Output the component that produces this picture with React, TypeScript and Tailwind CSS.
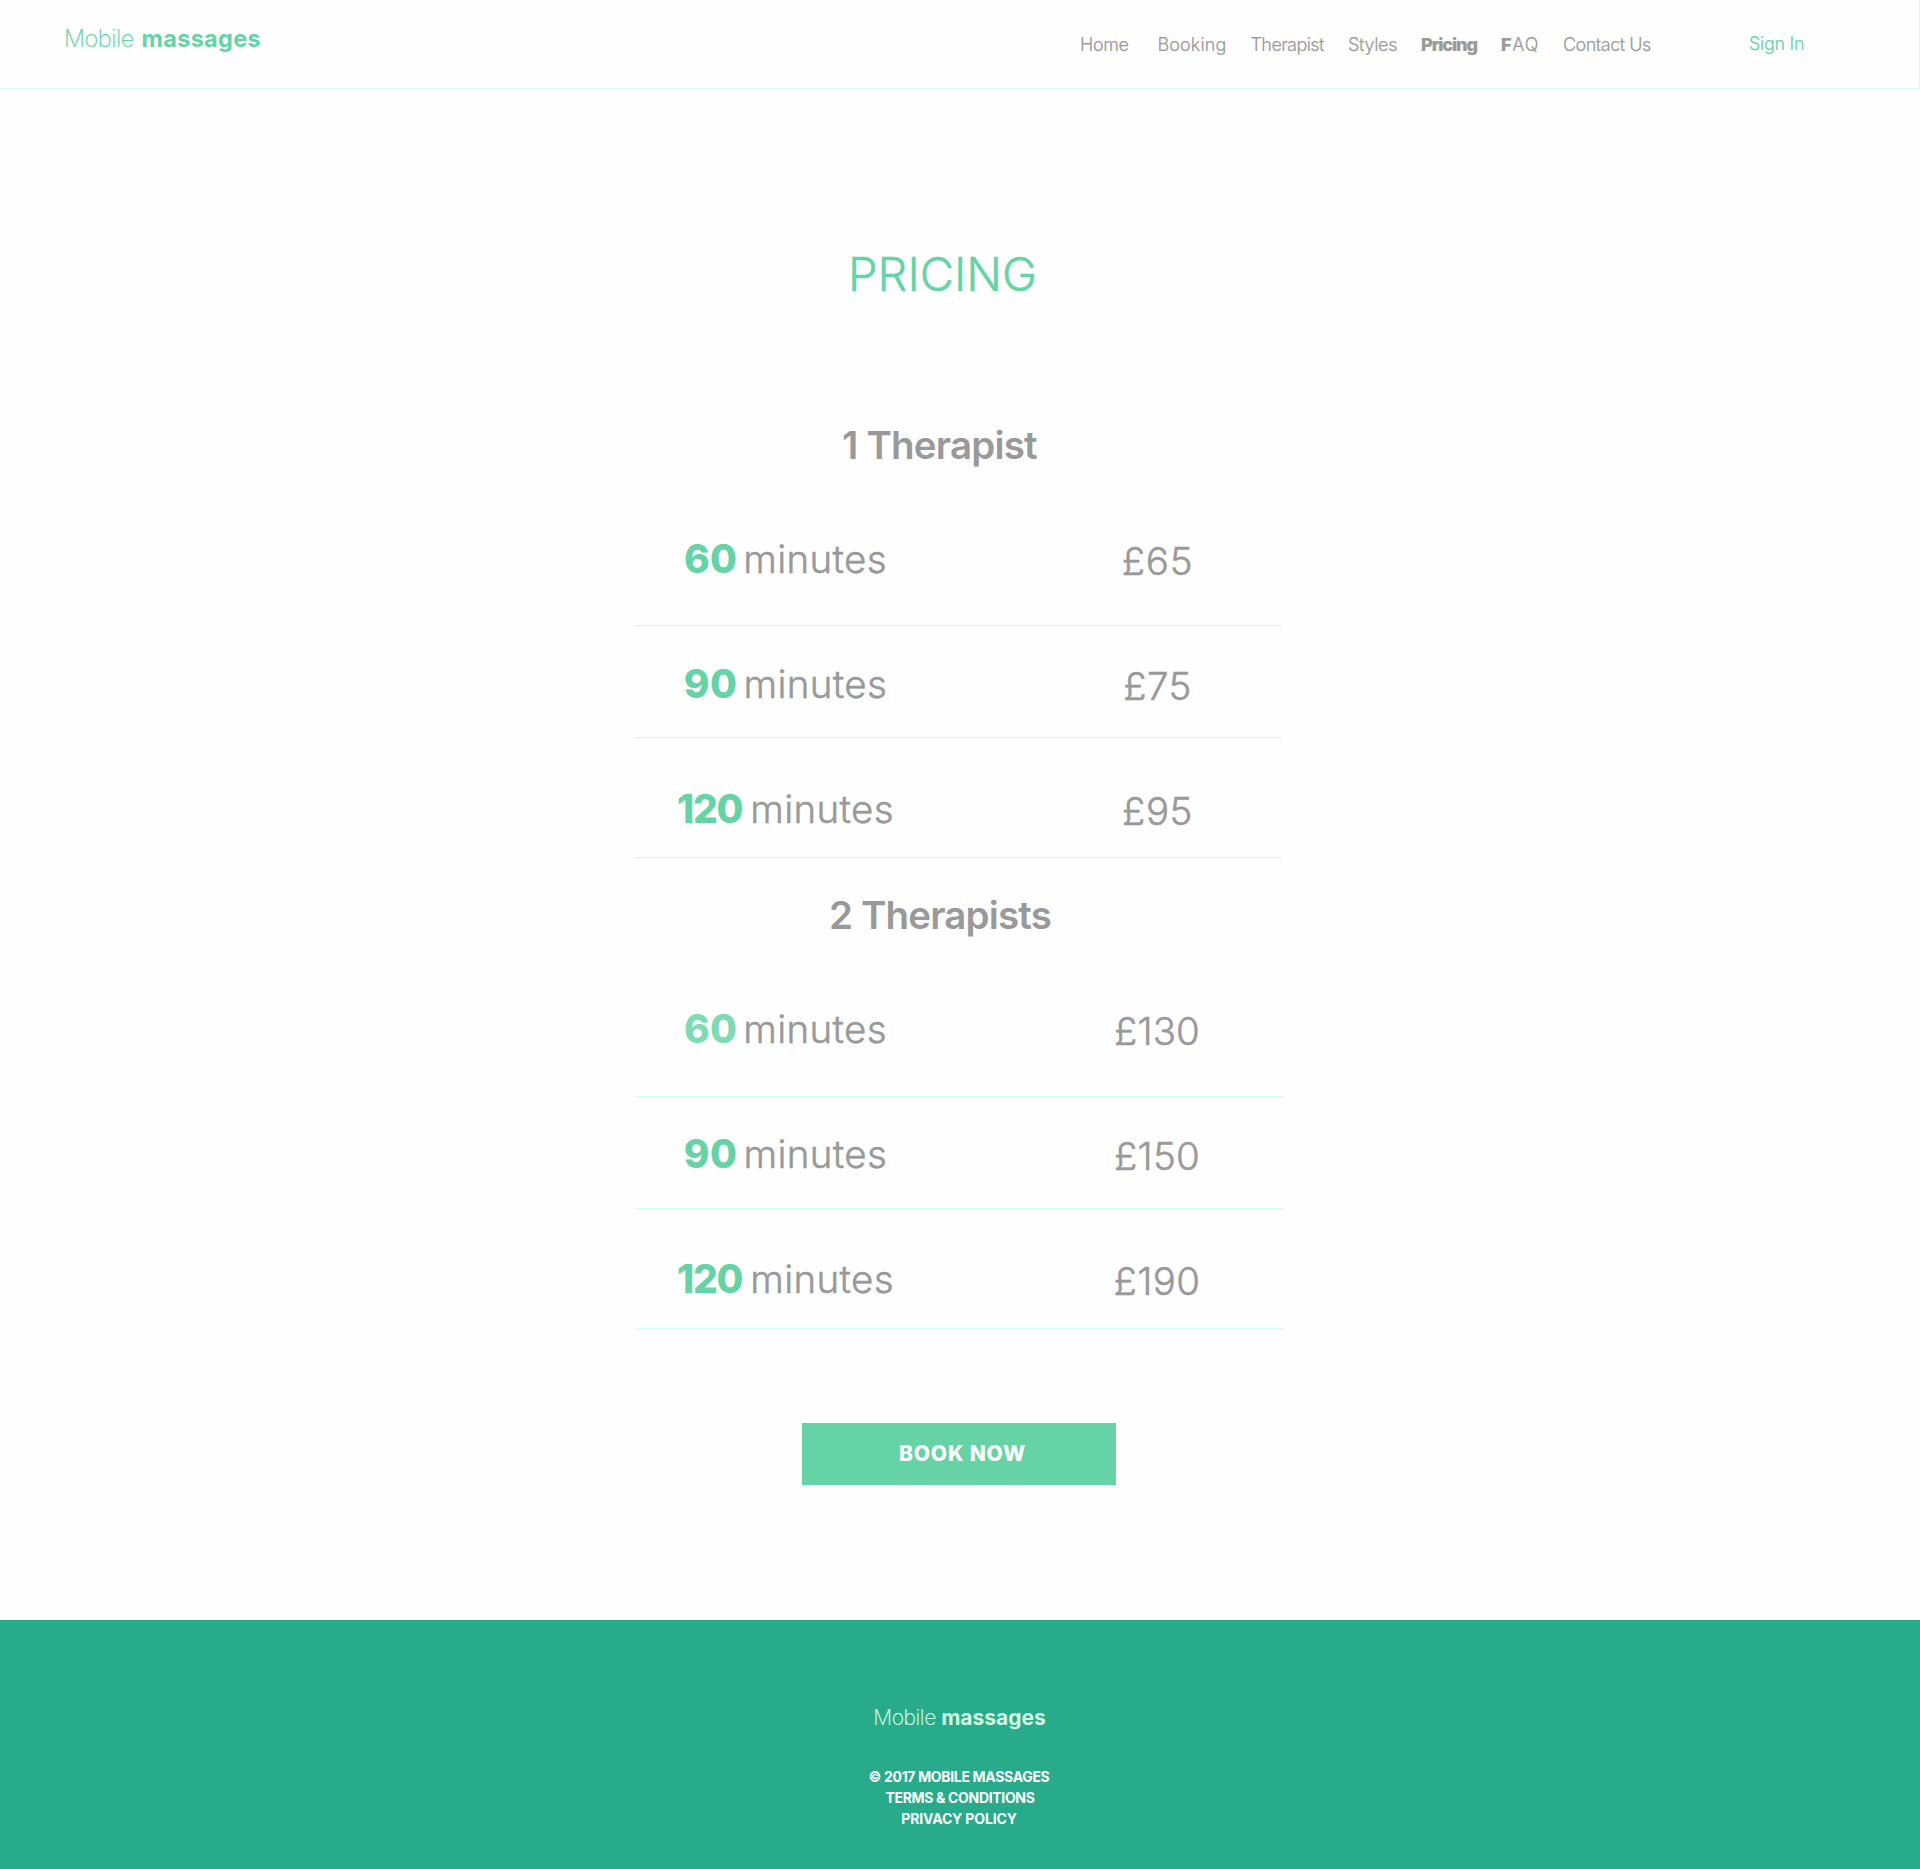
type Row = {
  value: string;
  price: string;
  row: string;
  valueClass: string;
  priceClass: string;
};

const navLinks = [
  { label: "Home", className: "w-[77.5px] tracking-[-0.4px]" },
  { label: "Booking", className: "w-[93px] tracking-[0.1px]" },
  { label: "Therapist", className: "w-[97.5px] tracking-[-0.58px]" },
  { label: "Styles", className: "w-[73px] tracking-[-0.33px]" },
  { label: "Pricing", className: "w-[80px] font-extrabold tracking-[-1.05px]" },
];

const oneTherapist: Row[] = [
  { value: "60", price: "£65", row: "h-[157px] pt-[66px]", valueClass: "mr-[6px] text-[#66d3a6] tracking-[0.2px]", priceClass: "tracking-[0.8px]" },
  { value: "90", price: "£75", row: "h-[112px] pt-[34px]", valueClass: "mr-[6px] text-[#66d3a6] tracking-[0.4px]", priceClass: "tracking-[0.3px]" },
  { value: "120", price: "£95", row: "h-[120px] pt-[47px]", valueClass: "mr-[8px] text-[#66d3a6] tracking-[-1.3px]", priceClass: "tracking-[0.5px]" },
];

const twoTherapists: Row[] = [
  { value: "60", price: "£130", row: "h-[158px] pt-[66px]", valueClass: "mr-[6px] text-[#80dab3] tracking-[0.2px]", priceClass: "tracking-[0.1px]" },
  { value: "90", price: "£150", row: "h-[112px] pt-[33px]", valueClass: "mr-[6px] text-[#66d3a6] tracking-[0.4px]", priceClass: "tracking-[0.2px]" },
  { value: "120", price: "£190", row: "h-[120px] pt-[46px]", valueClass: "mr-[8px] text-[#66d3a6] tracking-[-1.3px]", priceClass: "tracking-[0.4px]" },
];

function PriceTable({ rows, className, border, labelClass, priceCell }: {
  rows: Row[];
  className: string;
  border: string;
  labelClass: string;
  priceCell: string;
}) {
  return (
    <ul className={className}>
      {rows.map((r) => (
        <li key={r.value} className={`flex items-start justify-between border-b ${border} ${r.row}`}>
          <p className={`flex justify-center text-[38.5px] leading-[48px] font-light ${labelClass}`}>
            <span className={`text-[39px] font-extrabold ${r.valueClass}`}>{r.value}</span>
            <span className="tracking-[0.35px] [-webkit-text-stroke:0.5px]">minutes</span>
          </p>
          <p className={`mt-0.5 text-center text-[38.5px] leading-[48px] font-light [-webkit-text-stroke:0.5px] ${priceCell} ${r.priceClass}`}>
            {r.price}
          </p>
        </li>
      ))}
    </ul>
  );
}

export default function App() {
  return (
    <div className="min-h-[1869px] w-[1920px] bg-[#fefefe] font-['Inter',sans-serif] text-[#999999]">
      <header className="flex h-[89px] items-start border-r border-b border-[#d3fbeb] text-[18px] leading-6 font-light">
        <a className="mt-[23px] ml-[64px] flex w-[1016px] text-[23.5px] leading-8 text-[#66d3a6]">
          <span className="w-[77.5px] font-extralight tracking-[-0.5px] [-webkit-text-stroke:0.2px]">Mobile</span>
          <span className="font-bold tracking-[0.3px]">massages</span>
        </a>
        <nav className="mt-[33px] flex whitespace-nowrap [-webkit-text-stroke:0.2px]">
          {navLinks.map((l) => (
            <a key={l.label} className={l.className}>{l.label}</a>
          ))}
          <a className="w-[62px] tracking-[1px]">
            <span className="font-extrabold tracking-[0.6px]">F</span>AQ
          </a>
          <a className="w-[186px] tracking-[-0.5px]">Contact Us</a>
          <a className="-mt-px tracking-[-0.3px] text-[#66d3a6]">Sign In</a>
        </nav>
      </header>

      <main>
        <h1 className="mt-[155px] pr-[35px] text-center text-[47px] leading-[60px] font-light text-[#66d3a6] [-webkit-text-stroke:0.5px]">
          PRICING
        </h1>

        <h2 className="mt-[117px] pr-[41px] text-center text-[38.5px] leading-[48px] font-semibold tracking-[-0.8px]">
          1 Therapist
        </h2>
        <PriceTable rows={oneTherapist} className="ml-[634px] w-[648px]" border="border-[#dbf7f0]" labelClass="w-[303px]" priceCell="w-[249px]" />

        <h2 className="mt-[33px] pr-[40px] text-center text-[38.5px] leading-[48px] font-semibold tracking-[-0.85px]">
          2 Therapists
        </h2>
        <PriceTable rows={twoTherapists} className="ml-[635px] w-[648px]" border="border-[#d0fdec]" labelClass="w-[301px]" priceCell="w-[252px]" />

        <button className="mt-[94px] ml-[802px] block h-[62px] w-[314px] bg-[#66d3a6] pl-[7px] text-[21px] font-extrabold tracking-[0.85px] text-white">
          BOOK NOW
        </button>
      </main>

      <footer className="mt-[135px] flex h-[249px] flex-col items-center bg-[#28ab8a] pt-[84px] text-white">
        <a className="-ml-px flex text-[21px] leading-7 text-[#d2fbe2]">
          <span className="w-[68px] font-extralight tracking-[-0.4px] [-webkit-text-stroke:0.2px]">Mobile</span>
          <span className="font-bold">massages</span>
        </a>
        <div className="mt-[34px] text-center text-[14px] leading-[21px] font-bold">
          <p className="-ml-0.5 tracking-[-0.33px]">© 2017 MOBILE MASSAGES</p>
          <p className="tracking-[-0.33px]">TERMS &amp; CONDITIONS</p>
          <p className="-ml-0.5 tracking-[-0.15px]">PRIVACY POLICY</p>
        </div>
      </footer>
    </div>
  );
}
